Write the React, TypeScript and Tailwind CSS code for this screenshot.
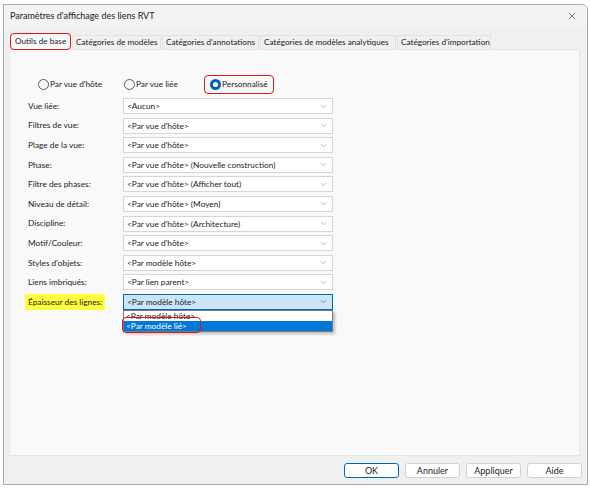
import { ChevronDown, X } from 'lucide-react';

const tabs = [
  { label: 'Outils de base', w: 'w-[61px]' },
  { label: 'Catégories de modèles', w: 'w-[89px]' },
  { label: "Catégories d'annotations", w: 'w-[97px]' },
  { label: 'Catégories de modèles analytiques', w: 'w-[136px]' },
  { label: "Catégories d'importation", w: 'w-[94px]' },
];

const rows = [
  { label: 'Vue liée:', value: '<Aucun>' },
  { label: 'Filtres de vue:', value: "<Par vue d'hôte>" },
  { label: 'Plage de la vue:', value: "<Par vue d'hôte>" },
  { label: 'Phase:', value: "<Par vue d'hôte> (Nouvelle construction)" },
  { label: 'Filtre des phases:', value: "<Par vue d'hôte> (Afficher tout)" },
  { label: 'Niveau de détail:', value: "<Par vue d'hôte> (Moyen)" },
  { label: 'Discipline:', value: "<Par vue d'hôte> (Architecture)" },
  { label: 'Motif/Couleur:', value: "<Par vue d'hôte>" },
  { label: "Styles d'objets:", value: '<Par modèle hôte>' },
  { label: 'Liens imbriqués:', value: '<Par lien parent>' },
];

function Radio({ label, checked }: { label: string; checked?: boolean }) {
  return (
    <div className="flex items-center gap-[1px] whitespace-nowrap">
      {checked ? (
        <span className="w-[11px] h-[11px] rounded-full bg-[#005fb8] flex items-center justify-center">
          <span className="w-[5px] h-[5px] rounded-full bg-white" />
        </span>
      ) : (
        <span className="w-[11px] h-[11px] rounded-full border border-[#5a5a5a] bg-[#f9f9f9]" />
      )}
      <span>{label}</span>
    </div>
  );
}

function Select({ value }: { value: string }) {
  return (
    <div className="w-[210px] h-[16px] bg-white border border-[#d6d6d6] flex items-center pl-[3px] pr-[4px]">
      <span className="flex-1 whitespace-nowrap leading-[14px]">{value}</span>
      <ChevronDown className="w-[9px] h-[9px] text-[#8a8a8a]" strokeWidth={1.5} />
    </div>
  );
}

function DialogButton({ label, primary }: { label: string; primary?: boolean }) {
  return (
    <button
      className={
        primary
          ? 'w-[55px] h-[15px] rounded-[3px] bg-white border border-[#0067c0] text-[9px] leading-none'
          : 'w-[55px] h-[15px] rounded-[3px] bg-white border border-[#d0d0d0] text-[9px] leading-none'
      }
    >
      {label}
    </button>
  );
}

export default function App() {
  return (
    <div className="w-[590px] h-[489px] bg-white pt-[4px] pl-[3px] pr-[2px] pb-[4px] text-[#1b1b1b] font-['Lato',sans-serif]">
      <div className="w-full h-full border border-[#a9a9a9] rounded-tr-[6px] bg-[#f0f0f0] flex flex-col overflow-hidden">
        {/* title bar */}
        <div className="h-[22px] bg-[#f3f3f3] flex items-center pl-[6px] pr-[9px] shrink-0">
          <span className="flex-1 text-[9px]">Paramètres d'affichage des liens RVT</span>
          <X className="w-[12px] h-[12px] text-[#333]" strokeWidth={1.3} />
        </div>

        {/* tabs */}
        <div className="flex items-end pl-[6px] pt-[6px] text-[8.2px] leading-none whitespace-nowrap shrink-0">
          {tabs.map((t, i) =>
            i === 0 ? (
              <div
                key={t.label}
                className={`relative ${t.w} h-[16px] pl-[4px] flex items-center bg-[#f9f9f9] border border-[#e2e2e2] border-b-0`}
              >
                {t.label}
                <span className="absolute -left-[1px] -top-[1px] -right-[1px] -bottom-[1px] border-[1.5px] border-[#e0141e] rounded-[4px]" />
              </div>
            ) : (
              <div
                key={t.label}
                className={`${t.w} h-[14px] pl-[3px] flex items-center bg-[#f0f0f0] border border-[#e2e2e2] border-b-0 ml-[1px]`}
              >
                {t.label}
              </div>
            ),
          )}
        </div>

        {/* page */}
        <div className="mx-[5px] w-[571px] h-[407px] bg-[#f9f9f9] border border-[#e5e5e5] text-[8.3px] leading-none">
          <div className="flex items-center pt-[26px] pl-[28px] h-[42px]">
            <div className="w-[86px]">
              <Radio label="Par vue d'hôte" />
            </div>
            <div className="w-[86px]">
              <Radio label="Par vue liée" />
            </div>
            <div className="relative">
              <Radio label="Personnalisé" checked />
              <span className="absolute -left-[6px] -top-[4px] -right-[6px] -bottom-[4px] border-[1.5px] border-[#e0141e] rounded-[4px]" />
            </div>
          </div>

          <div className="mt-[6px] pl-[18px] flex flex-col gap-[3.6px]">
            {rows.map((r) => (
              <div key={r.label} className="flex items-center">
                <span className="w-[95px] whitespace-nowrap">{r.label}</span>
                <Select value={r.value} />
              </div>
            ))}

            {/* line weight row, list open */}
            <div className="flex items-center">
              <span className="w-[95px] whitespace-nowrap">
                <span className="bg-[#ffff3d] -ml-[3px] px-[3px] py-[3px]">Épaisseur des lignes:</span>
              </span>
              <div className="relative">
                <div className="w-[210px] h-[16px] bg-[#cce4f7] border border-[#0067c0] flex items-center pl-[3px] pr-[4px]">
                  <span className="flex-1 leading-[14px]">&lt;Par modèle hôte&gt;</span>
                  <ChevronDown className="w-[9px] h-[9px] text-[#555]" strokeWidth={1.5} />
                </div>
                <div className="absolute left-0 top-[16px] w-[210px] bg-white border border-[#7a7a7a] shadow-[2px_2px_3px_rgba(0,0,0,0.25)]">
                  <div className="h-[10px] flex items-center pl-[2px] leading-[10px]">&lt;Par modèle hôte&gt;</div>
                  <div className="relative h-[10px] flex items-center pl-[2px] leading-[10px] bg-[#0078d7] text-white">
                    &lt;Par modèle lié&gt;
                    <span className="absolute -left-[2px] -top-[4px] w-[79px] h-[16px] border-[1.5px] border-[#e0141e] rounded-[4px]" />
                  </div>
                </div>
              </div>
            </div>
          </div>
        </div>

        {/* buttons */}
        <div className="flex justify-end gap-[6px] pr-[5px] pt-[7px]">
          <DialogButton label="OK" primary />
          <DialogButton label="Annuler" />
          <DialogButton label="Appliquer" />
          <DialogButton label="Aide" />
        </div>
      </div>
    </div>
  );
}
